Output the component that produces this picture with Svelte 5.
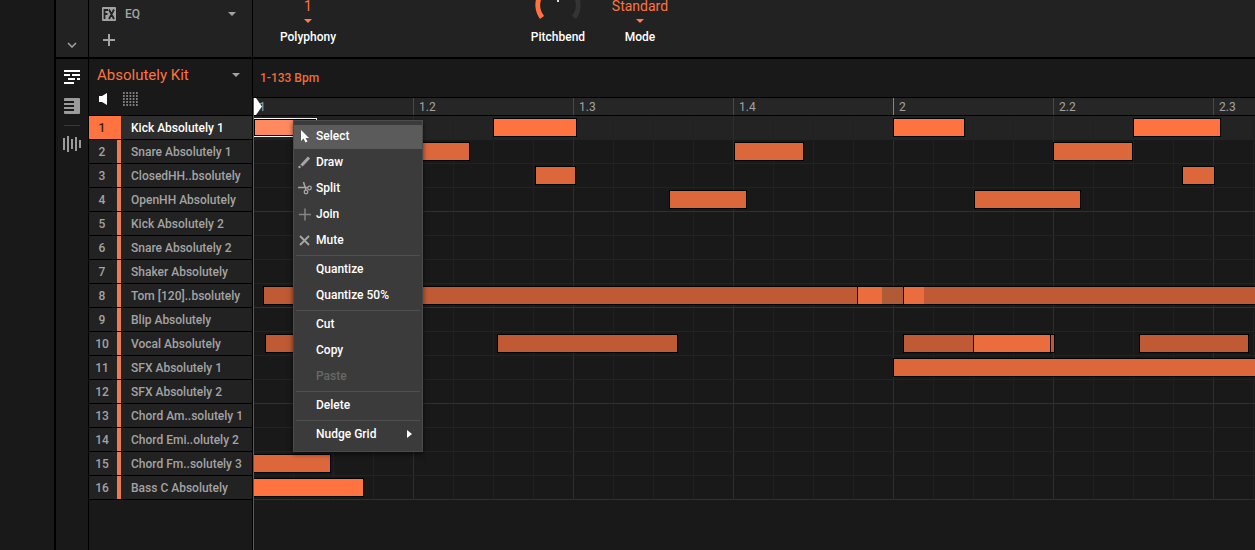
<script>
  const tracks = [
    'Kick Absolutely 1',
    'Snare Absolutely 1',
    'ClosedHH..bsolutely',
    'OpenHH Absolutely',
    'Kick Absolutely 2',
    'Snare Absolutely 2',
    'Shaker Absolutely',
    'Tom [120]..bsolutely',
    'Blip Absolutely',
    'Vocal Absolutely',
    'SFX Absolutely 1',
    'SFX Absolutely 2',
    'Chord Am..solutely 1',
    'Chord Emi..olutely 2',
    'Chord Fm..solutely 3',
    'Bass C Absolutely',
  ];

  // x and w are in pixels from the start of the pattern
  const notes = [
    { track: 0, x: 0, w: 64, level: 'selected' },
    { track: 0, x: 240, w: 84, level: 'full' },
    { track: 0, x: 640, w: 72, level: 'full' },
    { track: 0, x: 880, w: 88, level: 'full' },
    { track: 1, x: 160, w: 57, level: 'high' },
    { track: 1, x: 481, w: 70, level: 'high' },
    { track: 1, x: 800, w: 80, level: 'high' },
    { track: 2, x: 282, w: 41, level: 'high' },
    { track: 2, x: 929, w: 33, level: 'high' },
    { track: 3, x: 416, w: 78, level: 'high' },
    { track: 3, x: 721, w: 107, level: 'high' },
    { track: 7, x: 10, w: 1200, level: 'low' },
    { track: 7, x: 604, w: 26, level: 'mid' },
    { track: 7, x: 629, w: 22, level: 'dim' },
    { track: 7, x: 650, w: 21, level: 'mid open' },
    { track: 9, x: 12, w: 80, level: 'low' },
    { track: 9, x: 244, w: 181, level: 'low' },
    { track: 9, x: 650, w: 152, level: 'low' },
    { track: 9, x: 720, w: 78, level: 'mid' },
    { track: 9, x: 886, w: 110, level: 'low' },
    { track: 10, x: 640, w: 600, level: 'high' },
    { track: 14, x: 0, w: 78, level: 'high' },
    { track: 15, x: 0, w: 111, level: 'full' },
  ];

  const beats = ['1', '1.2', '1.3', '1.4', '2', '2.2', '2.3'];

  const menu = [
    [
      { label: 'Select', icon: 'arrow' },
      { label: 'Draw', icon: 'pencil' },
      { label: 'Split', icon: 'scissors' },
      { label: 'Join', icon: 'plus' },
      { label: 'Mute', icon: 'cross' },
    ],
    [{ label: 'Quantize' }, { label: 'Quantize 50%' }],
    [{ label: 'Cut' }, { label: 'Copy' }, { label: 'Paste', disabled: true }],
    [{ label: 'Delete' }],
    [{ label: 'Nudge Grid', submenu: true }],
  ];

  let selected = $state(0);
  let tool = $state('Select');
</script>

<div class="app">
  <div class="gutter"></div>

  <nav class="rail">
    <div class="rail-top">
      <button aria-label="Collapse">
        <svg width="10" height="6"><path d="M1 1l4 4 4-4" fill="none" stroke="#a3a3a3" stroke-width="1.5" /></svg>
      </button>
    </div>
    <div class="rail-tools">
      <button aria-label="Pattern editor">
        <svg width="16" height="14" fill="#fff">
          <path d="M0 0h16v2H0zM0 4h6v2H0zM8 4h8v2H8zM4 8h7v2H4zM13 8h3v2h-3zM0 12h10v2H0z" />
        </svg>
      </button>
      <button aria-label="Keyboard view">
        <svg width="16" height="16">
          <rect width="16" height="16" rx="1" fill="#9b9b9b" />
          <path d="M0 4h10M0 8h10M0 12h10" stroke="#191919" stroke-width="2" />
        </svg>
      </button>
      <hr />
      <button aria-label="Sample editor">
        <svg width="18" height="16">
          <path d="M1 2v12M5 0v16M9 3v10M13 1v14M17 4v8" stroke="#9b9b9b" stroke-width="2" />
        </svg>
      </button>
    </div>
  </nav>

  <aside class="sidebar">
    <div class="plugins">
      <button class="plugin">
        <svg width="14" height="14">
          <rect width="14" height="14" rx="1" fill="#a3a3a3" />
          <path d="M2.500 12V3H6M2.500 7h3M7 2.500l5 9.500M12 2.500L7 12" fill="none" stroke="#222" stroke-width="1.800" />
        </svg>
        <span>EQ</span>
        <i class="caret"></i>
      </button>
      <button class="add" aria-label="Add plugin">
        <svg width="12" height="12"><path d="M6 0v12M0 6h12" stroke="#a3a3a3" stroke-width="2" /></svg>
      </button>
    </div>

    <div class="group">
      <button class="kit">
        <span>Absolutely Kit</span>
        <i class="caret"></i>
      </button>
      <div class="group-tools">
        <button aria-label="Mute group">
          <svg width="8" height="12"><path d="M0 3h3l5-3v12l-5-3H0z" fill="#fff" /></svg>
        </button>
        <button aria-label="Pads">
          <svg width="15" height="14">
            <path
              d="M0 1h15M0 4h15M0 7h15M0 10h15M0 13h15"
              stroke="#a3a3a3"
              stroke-width="1.500"
              stroke-dasharray="1.700 1.550"
            />
          </svg>
        </button>
      </div>
    </div>

    <ol class="tracks">
      {#each tracks as name, i}
        <li>
          <button class="track" class:active={selected === i} onclick={() => (selected = i)}>
            <span class="number">{i + 1}</span>
            <span class="name">{name}</span>
          </button>
        </li>
      {/each}
    </ol>
  </aside>

  <main>
    <section class="params">
      <div class="param">
        <button class="value">1</button>
        <i class="caret small"></i>
        <span>Polyphony</span>
      </div>
      <div class="param second">
        <svg class="knob" width="48" height="48" fill="none">
          <path d="M8 36.500A21 21 0 0 1 24 3" stroke="#ff7340" stroke-width="5" />
          <path d="M24 3A21 21 0 0 1 40 36.500" stroke="#343434" stroke-width="5" />
          <path d="M24 10v11" stroke="#ddd" stroke-width="2" />
        </svg>
        <span>Pitchbend</span>
      </div>
      <div class="param">
        <button class="value">Standard</button>
        <i class="caret small"></i>
        <span>Mode</span>
      </div>
    </section>

    <header class="pattern">1-133 Bpm</header>

    <div class="editor">
      <div class="ruler">
        {#each beats as beat, i}
          <span class:bar-end={i % 4 === 3}>{beat}</span>
        {/each}
        <svg class="playhead" width="9" height="17"><path d="M0 0h2l6 8.500L2 17H0z" fill="#fff" /></svg>
      </div>
      <div class="lanes">
        {#each tracks as name, i}
          <div class="lane" class:active={selected === i}>
            {#each notes.filter((n) => n.track === i) as note}
              <div class="note {note.level}" style="left: {note.x}px; width: {note.w}px"></div>
            {/each}
          </div>
        {/each}
      </div>
    </div>
  </main>

  <div class="menu" role="menu">
    {#each menu as group}
      <div class="menu-group">
        {#each group as item}
          <button
            role="menuitem"
            class:current={tool === item.label}
            disabled={item.disabled}
            onclick={() => (tool = item.label)}
          >
            <svg class="icon" width="16" height="16" fill="none" stroke="#a6a6a6" stroke-width="1.500">
              {#if item.icon === 'arrow'}
                <path d="M4 2v11l2.500-2.500 2 4 2-1-2-3.500H12z" fill="#fff" stroke="none" />
              {:else if item.icon === 'pencil'}
                <path d="M4.500 11.500L12 3.500" stroke-width="3" />
                <path d="M1.500 13.500l2-1" stroke-width="2" />
              {:else if item.icon === 'scissors'}
                <path d="M1 7.500h9.500M6.500 2l2.500 8" />
                <circle cx="12.500" cy="8" r="1.800" stroke-width="1.300" />
                <circle cx="9" cy="12" r="1.800" stroke-width="1.300" />
              {:else if item.icon === 'plus'}
                <path d="M8 2.500v12M2 8.500h12" stroke="#858585" />
              {:else if item.icon === 'cross'}
                <path d="M3 4l9 9M12 4l-9 9" stroke-width="1.800" />
              {/if}
            </svg>
            <span>{item.label}</span>
            {#if item.submenu}
              <i class="arrow"></i>
            {/if}
          </button>
        {/each}
      </div>
    {/each}
  </div>
</div>

<style>
  :global(body) {
    background: #191919;
  }

  .app {
    position: relative;
    display: flex;
    min-height: 100vh;
    overflow: hidden;
    background: #191919;
    font: 500 12px/16px Roboto, sans-serif;
    color: #a3a3a3;
  }

  button {
    display: block;
    margin: 0;
    padding: 0;
    border: none;
    background: none;
    font: inherit;
    color: inherit;
    text-align: left;
  }

  svg {
    display: block;
    flex: none;
  }

  .caret {
    border: 4px solid transparent;
    border-top-color: #a3a3a3;
    border-bottom: none;
  }

  .caret.small {
    border-top-color: #ff7d50;
  }

  .gutter {
    width: 54px;
    border-right: 2px solid #000;
  }

  .rail {
    width: 32px;
    border-right: 1px solid #000;
  }

  .rail-top {
    display: flex;
    align-items: flex-end;
    justify-content: center;
    box-sizing: border-box;
    height: 59px;
    padding-bottom: 9px;
    border-bottom: 2px solid #000;
    background: #222;
  }

  .rail-tools {
    display: flex;
    flex-direction: column;
    align-items: center;
    gap: 14px;
    padding-top: 11px;
  }

  .rail-tools hr {
    width: 16px;
    margin: -3px 0 -4px;
    border: none;
    border-top: 1px solid #3a3a3a;
  }

  .sidebar {
    width: 163px;
    border-right: 1px solid #000;
  }

  .plugins {
    box-sizing: border-box;
    height: 59px;
    padding: 6px 16px 0 13px;
    border-bottom: 2px solid #000;
    background: #222;
  }

  .plugin {
    display: flex;
    align-items: center;
    gap: 9px;
    width: 100%;
  }

  .plugin .caret,
  .kit .caret {
    margin-left: auto;
  }

  .add {
    margin: 12px 0 0 1px;
  }

  .group {
    box-sizing: border-box;
    height: 57px;
    padding: 6px 12px 0 8px;
    border-bottom: 1px solid #000;
  }

  .kit {
    display: flex;
    align-items: center;
    width: 100%;
    font-size: 15px;
    font-weight: 400;
    line-height: 20px;
    color: #ff7340;
  }

  .group-tools {
    display: flex;
    align-items: center;
    gap: 16px;
    padding: 7px 2px;
  }

  .tracks {
    margin: 0;
    padding: 0;
    list-style: none;
  }

  .track {
    display: flex;
    width: 100%;
    height: 24px;
    border-bottom: 1px solid #000;
    background: #222;
    line-height: 24px;
  }

  .number {
    box-sizing: border-box;
    width: 32px;
    padding-right: 2px;
    border-right: 4px solid #ee7a50;
    text-align: center;
  }

  .name {
    padding-left: 10px;
  }

  .track.active {
    background: #2d2d2d;
    color: #fff;
  }

  .track.active .number {
    background: #ff7340;
    border-color: #ff7340;
    color: #3b1a0e;
  }

  main {
    display: flex;
    flex-direction: column;
    flex: 1;
    min-width: 0;
  }

  .params {
    display: flex;
    gap: 2px;
    box-sizing: border-box;
    height: 59px;
    padding: 0 15px 12px;
    border-bottom: 2px solid #000;
    background: #222;
    overflow: hidden;
  }

  .param {
    display: flex;
    flex-direction: column;
    align-items: center;
    justify-content: flex-end;
    width: 80px;
    color: #fff;
  }

  .param.second {
    margin-left: 168px;
  }

  .value {
    margin-bottom: 7px;
    font-size: 14px;
    font-weight: 400;
    line-height: 12px;
    color: #ff7340;
  }

  .param .caret {
    margin-bottom: 6px;
  }

  .pattern {
    padding: 11px 7px;
    border-bottom: 1px solid #000;
    color: #f06c3c;
  }

  .editor {
    flex: 1;
    border-left: 1px solid #5a5a5a;
  }

  .ruler {
    position: relative;
    display: flex;
    height: 17px;
    border-bottom: 1px solid #000;
    background: #262626;
    overflow: hidden;
    font-weight: 400;
    line-height: 18px;
  }

  .ruler span {
    flex: none;
    box-sizing: border-box;
    width: 160px;
    padding-left: 5px;
    border-right: 1px solid #484848;
  }

  .ruler .bar-end {
    border-right-color: #858585;
  }

  .playhead {
    position: absolute;
    left: 0;
    top: 0;
  }

  .lanes {
    overflow: hidden;
  }

  .lane {
    position: relative;
    box-sizing: border-box;
    height: 24px;
    border-bottom: 1px solid #222;
    background:
      repeating-linear-gradient(90deg, transparent 0 159px, #2d2d2d 159px 160px),
      repeating-linear-gradient(90deg, transparent 0 39px, #202020 39px 40px);
  }

  .lane.active {
    background-color: #232323;
  }

  .lane:nth-child(4n) {
    border-bottom-color: #303030;
  }

  .note {
    position: absolute;
    top: 2px;
    box-sizing: border-box;
    height: 19px;
    margin-left: -1px;
    border: 1px solid #000;
  }

  .full {
    background: #ff7340;
  }

  .high {
    background: #dc673b;
  }

  .mid {
    background: #eb6d3e;
  }

  .low {
    background: #c05a35;
  }

  .dim {
    background: #b15a38;
    border-left: none;
  }

  .open {
    border-right: none;
  }

  .selected {
    border-color: #fff;
    background: #ff8a5f;
    box-shadow: inset 0 0 0 1px #000;
  }

  .menu {
    position: absolute;
    left: 293px;
    top: 120px;
    box-sizing: border-box;
    width: 130px;
    padding: 2px 0 4px;
    border: 1px solid #4b4b4b;
    background: #3b3b3b;
    box-shadow: 0 2px 5px rgba(0, 0, 0, 0.6);
    color: #fff;
  }

  .menu-group + .menu-group::before {
    content: '';
    display: block;
    margin: 2px 2px 0;
    border-top: 1px solid #4f4f4f;
  }

  .menu button {
    display: flex;
    align-items: center;
    box-sizing: border-box;
    width: 100%;
    height: 24px;
    margin-top: 2px;
    padding: 0 10px 2px 3px;
  }

  .menu button.current {
    background: #5b5b5b;
  }

  .menu button:disabled {
    color: #686868;
  }

  .icon {
    margin-right: 3px;
  }

  .arrow {
    margin-left: auto;
    border: 4px solid transparent;
    border-left: 5px solid #fff;
    border-right: none;
  }
</style>
